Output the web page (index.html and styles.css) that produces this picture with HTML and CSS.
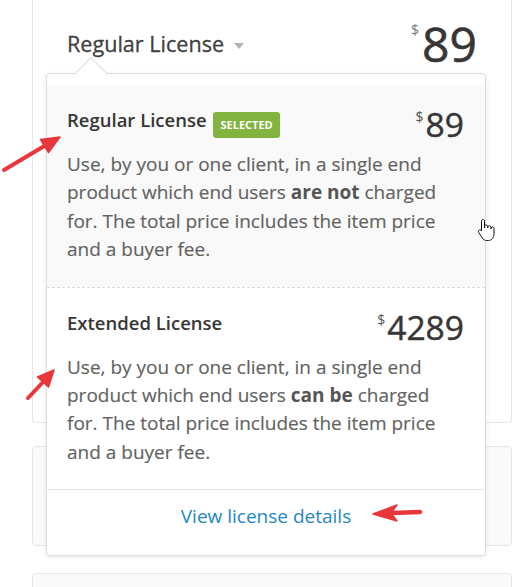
FILE: index.html
```html
<!DOCTYPE html>
<html lang="en">
<head>
<meta charset="utf-8">
<title>License selector</title>
<link rel="stylesheet" href="styles.css">
</head>
<body>
<div class="page">
  <section class="card card-main">
    <div class="license-head">
      <div class="license-toggle">Regular License <span class="caret"></span></div>
      <div class="price-big"><span class="cur">$</span><span class="amt">89</span></div>
    </div>

    <div class="dropdown">
      <div class="option option-selected">
        <div class="option-head">
          <div class="option-title">Regular License <span class="badge">Selected</span></div>
          <div class="option-price"><span class="cur">$</span><span class="amt">89</span></div>
        </div>
        <p class="option-desc">Use, by you or one client, in a single end product which end users <strong>are not</strong> charged for. The total price includes the item price and a buyer fee.</p>
      </div>
      <div class="option option-alt">
        <div class="option-head">
          <div class="option-title">Extended License</div>
          <div class="option-price"><span class="cur">$</span><span class="amt">4289</span></div>
        </div>
        <p class="option-desc">Use, by you or one client, in a single end product which end users <strong>can be</strong> charged for. The total price includes the item price and a buyer fee.</p>
      </div>
      <div class="dropdown-foot"><a class="details-link" href="#">View license details</a></div>
    </div>
  </section>
  <section class="card card-muted"></section>
  <section class="card card-muted card-last"></section>
</div>

<svg class="annotations" width="520" height="587" viewBox="0 0 520 587" aria-hidden="true">
  <g fill="#e8363b" stroke="#e8363b" stroke-linecap="round" stroke-linejoin="round">
    <line x1="4" y1="170" x2="46" y2="145" stroke-width="4"/>
    <polygon points="60,137 48.5,152.5 40.5,139.5" stroke-width="1.5"/>
    <line x1="28" y1="398" x2="44" y2="381" stroke-width="4"/>
    <polygon points="54,370 48.5,387 37.5,377" stroke-width="1.5"/>
    <line x1="420" y1="512" x2="392" y2="513" stroke-width="4.5"/>
    <polygon points="373,514 397,505 391,513 397,521" stroke-width="1.5"/>
  </g>
  <path transform="translate(477 218)" d="M6 1.5c.9 0 1.5.7 1.5 1.6V10h.2V8.4c0-.9.7-1.5 1.5-1.5s1.5.6 1.5 1.5V10h.2V9.2c0-.9.7-1.5 1.5-1.5s1.5.6 1.5 1.5V11h.2v-.6c0-.9.6-1.5 1.4-1.5.9 0 1.5.6 1.5 1.5v5.6c0 3.4-2.2 6.5-5.6 6.5H9.6c-1.8 0-3.2-1-4.2-2.4L1.7 14.3c-.5-.8-.3-1.8.5-2.2.7-.4 1.6-.2 2.1.4l.2.3V3.1C4.5 2.2 5.1 1.5 6 1.5z" fill="#fff" stroke="#111" stroke-width="1"/>
</svg>
</body>
</html>
```

FILE: styles.css
```css
* { box-sizing: border-box; }

html, body {
  margin: 0;
  background: #fff;
}

body {
  position: relative;
  width: 520px;
  height: 587px;
  overflow: hidden;
  font-family: "Open Sans", "DejaVu Sans", sans-serif;
  color: #666;
}

.page {
  padding: 0 8px 0 32px;
}

.card {
  border: 1px solid #e3e6ea;
  border-radius: 4px;
}

.card-main {
  position: relative;
  height: 423px;
  border-top: none;
  border-radius: 0 0 4px 4px;
  background: #fff;
}

.card-muted {
  height: 100px;
  margin-top: 23px;
  background: #fafafa;
}

.card-last {
  margin-top: 27px;
  height: 120px;
}

/* header */
.license-head {
  display: flex;
  justify-content: space-between;
  align-items: flex-start;
  padding: 20px 34px 0 34px;
}

.license-toggle {
  margin-top: 9px;
  font-size: 21.6px;
  line-height: 30px;
  color: #3f3f3f;
  -webkit-text-stroke: 0.3px #3f3f3f;
}

.caret {
  display: inline-block;
  width: 0;
  height: 0;
  margin-left: 4px;
  vertical-align: middle;
  border-left: 5px solid transparent;
  border-right: 5px solid transparent;
  border-top: 6px solid #b3b3b3;
}

.price-big {
  display: flex;
  align-items: flex-start;
  color: #363636;
}

.price-big .cur {
  font-size: 14px;
  line-height: 14px;
  margin-top: 3px;
  margin-right: 3px;
  color: #777;
}

.price-big .amt {
  font-size: 48px;
  line-height: 48px;
  -webkit-text-stroke: 0.6px #363636;
}

/* dropdown */
.dropdown {
  position: absolute;
  left: 13px;
  top: 73px;
  width: 440px;
  padding-top: 11px;
  background: #fff;
  border: 1px solid #dedede;
  border-radius: 4px;
  box-shadow: 0 1px 4px rgba(0, 0, 0, 0.10);
}

.dropdown::before {
  content: "";
  position: absolute;
  left: 31.5px;
  top: -12.5px;
  width: 23px;
  height: 23px;
  background: #fff;
  border-top: 1px solid #dedede;
  border-left: 1px solid #dedede;
  transform: rotate(45deg);
}

.option {
  position: relative;
  padding: 22px 21px 23px 20px;
}

.option-selected {
  background: #f9f9f9;
}

.option-alt {
  border-top: 1px dashed #dcdcdc;
}

.option-head {
  display: flex;
  justify-content: space-between;
  align-items: flex-start;
}

.option-title {
  font-size: 18.5px;
  line-height: 26px;
  font-weight: 600;
  color: #363636;
}

.badge {
  display: inline-block;
  margin-left: 2px;
  padding: 5px 7px;
  font-size: 11px;
  line-height: 16px;
  font-weight: 700;
  text-transform: uppercase;
  color: #fff;
  background: #82b440;
  border-radius: 3px;
  vertical-align: -2px;
}

.option-price {
  display: flex;
  align-items: flex-start;
  color: #363636;
}

.option-price .cur {
  font-size: 14px;
  line-height: 14px;
  margin-top: 3px;
  margin-right: 2px;
  color: #555;
}

.option-price .amt {
  font-size: 33.6px;
  line-height: 34px;
  -webkit-text-stroke: 0.45px #363636;
}

.option-desc {
  margin: 9px 0 0 0;
  font-size: 19px;
  line-height: 28.4px;
  color: #626262;
  -webkit-text-stroke: 0.15px #626262;
}

.option-desc strong {
  font-weight: 700;
  color: #555;
  -webkit-text-stroke: 0;
}

.dropdown-foot {
  position: relative;
  border-top: 1px solid #e4e8ec;
  padding: 12px 0 24px;
  text-align: center;
}

.details-link {
  font-size: 19px;
  line-height: 28.4px;
  color: #2587c2;
  text-decoration: none;
}

/* annotation overlay */
.annotations {
  position: absolute;
  left: 0;
  top: 0;
  pointer-events: none;
}
```
